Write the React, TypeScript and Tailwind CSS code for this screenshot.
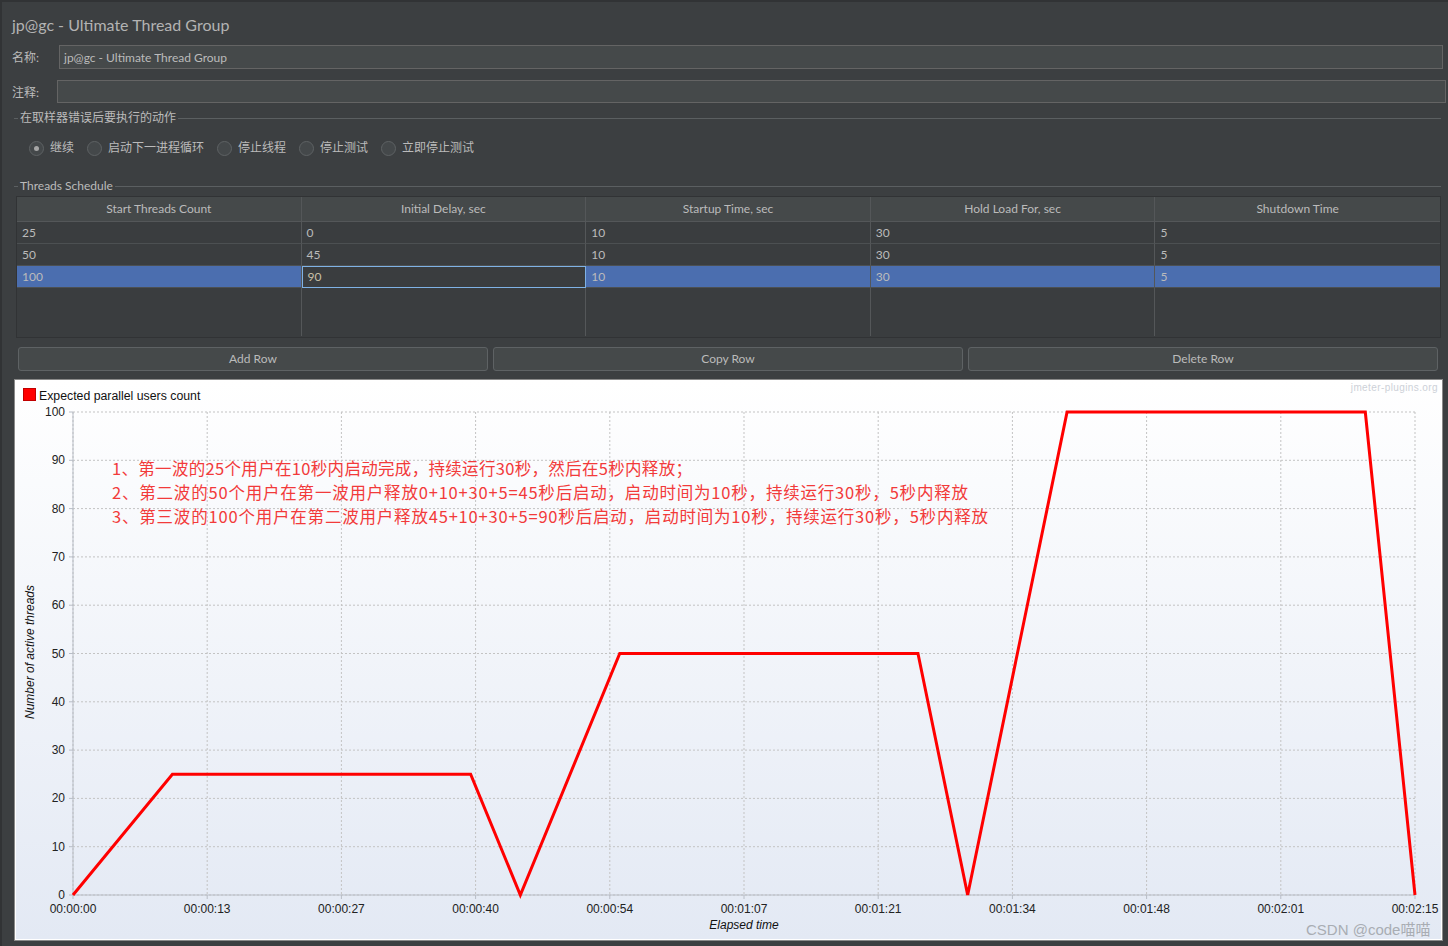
import React from "react";

const cols = [
  "Start Threads Count",
  "Initial Delay, sec",
  "Startup Time, sec",
  "Hold Load For, sec",
  "Shutdown Time",
];
const rows = [
  ["25", "0", "10", "30", "5"],
  ["50", "45", "10", "30", "5"],
  ["100", "90", "10", "30", "5"],
];

function Separator({ label, className }: { label: string; className: string }) {
  return (
    <div className={"flex items-center " + className}>
      <div className="w-[4px] h-px bg-[#5b5f61]" />
      <span className="px-[2px] leading-[16px]">{label}</span>
      <div className="flex-1 h-px bg-[#5b5f61]" />
    </div>
  );
}

function Radio({ label, checked }: { label: string; checked?: boolean }) {
  return (
    <div className="flex items-center gap-[6px]">
      <div className="w-[15px] h-[15px] rounded-full border border-[#5e6264] bg-[#44484a] flex items-center justify-center">
        {checked && <div className="w-[5px] h-[5px] rounded-full bg-[#a6a6a6]" />}
      </div>
      <span className="text-[12px] leading-[16px]">{label}</span>
    </div>
  );
}

function Chart() {
  const x0 = 58;
  const x1 = 1400;
  const yTop = 32;
  const yBot = 515;
  const sx = (t: number) => x0 + (t * (x1 - x0)) / 135;
  const sy = (v: number) => yBot - (v * (yBot - yTop)) / 100;
  const pts = [
    [0, 0],
    [10, 25],
    [40, 25],
    [45, 0],
    [55, 50],
    [85, 50],
    [90, 0],
    [100, 100],
    [130, 100],
    [135, 0],
  ];
  const xLabels = [
    "00:00:00",
    "00:00:13",
    "00:00:27",
    "00:00:40",
    "00:00:54",
    "00:01:07",
    "00:01:21",
    "00:01:34",
    "00:01:48",
    "00:02:01",
    "00:02:15",
  ];
  const yVals = [0, 10, 20, 30, 40, 50, 60, 70, 80, 90, 100];
  const font = "'Liberation Sans', Arial, sans-serif";
  return (
    <svg width={1427} height={560} className="block">
      <defs>
        <linearGradient id="bg" x1="0" y1="0" x2="0" y2="1">
          <stop offset="0%" stopColor="#ffffff" />
          <stop offset="100%" stopColor="#e3e9f4" />
        </linearGradient>
      </defs>
      <rect x={0} y={0} width={1427} height={560} fill="#ffffff" />
      <rect x={1} y={1} width={1425} height={558} fill="url(#bg)" />
      {yVals.map((v) => (
        <line
          key={"h" + v}
          x1={x0}
          x2={x1}
          y1={sy(v)}
          y2={sy(v)}
          stroke="#c3c3c3"
          strokeDasharray="2 2"
          strokeWidth={1}
        />
      ))}
      {xLabels.map((_, i) => {
        const x = x0 + (i * (x1 - x0)) / 10;
        return (
          <line
            key={"v" + i}
            x1={x}
            x2={x}
            y1={yTop}
            y2={yBot}
            stroke="#c3c3c3"
            strokeDasharray="2 2"
            strokeWidth={1}
          />
        );
      })}
      <line x1={x0} x2={x0} y1={yTop} y2={yBot} stroke="#b8bdc6" strokeWidth={1} />
      <line x1={x0} x2={x1} y1={yBot} y2={yBot} stroke="#b8bdc6" strokeWidth={1} />
      {yVals.map((v) => (
        <g key={"yl" + v}>
          <line x1={x0 - 4} x2={x0} y1={sy(v)} y2={sy(v)} stroke="#b8bdc6" />
          <text
            x={x0 - 8}
            y={sy(v) + 4}
            textAnchor="end"
            fontSize={12}
            fontFamily={font}
            fill="#222"
          >
            {v}
          </text>
        </g>
      ))}
      {xLabels.map((l, i) => {
        const x = x0 + (i * (x1 - x0)) / 10;
        return (
          <g key={"xl" + i}>
            <line x1={x} x2={x} y1={yBot} y2={yBot + 4} stroke="#b8bdc6" />
            <text
              x={x}
              y={yBot + 18}
              textAnchor="middle"
              fontSize={12}
              fontFamily={font}
              fill="#222"
            >
              {l}
            </text>
          </g>
        );
      })}
      <text
        x={(x0 + x1) / 2}
        y={549}
        textAnchor="middle"
        fontSize={12}
        fontStyle="italic"
        fontFamily={font}
        fill="#111"
      >
        Elapsed time
      </text>
      <text
        x={0}
        y={0}
        transform="translate(19 272) rotate(-90)"
        textAnchor="middle"
        fontSize={12}
        fontStyle="italic"
        fontFamily={font}
        fill="#111"
      >
        Number of active threads
      </text>
      <rect x={8.5} y={8.5} width={12} height={12} fill="#ff0000" stroke="#c00000" strokeWidth={1} />
      <text x={24} y={20} fontSize={12.3} fontFamily={font} fill="#111">
        Expected parallel users count
      </text>
      <text
        x={1423}
        y={11}
        textAnchor="end"
        fontSize={10}
        letterSpacing={0.4}
        fontFamily={font}
        fill="#cdd1d8"
      >
        jmeter-plugins.org
      </text>
      <polyline
        points={pts.map(([t, v]) => `${sx(t)},${sy(v)}`).join(" ")}
        fill="none"
        stroke="#ff0000"
        strokeWidth={3}
        strokeLinejoin="miter"
      />
      <g fontFamily="'Noto Sans CJK SC', 'Noto Sans', sans-serif" fontSize={16.5} fill="#f23a3a">
        <text x={97} y={95} textLength={580} lengthAdjust="spacing">
          1、第一波的25个用户在10秒内启动完成，持续运行30秒，然后在5秒内释放；
        </text>
        <text x={97} y={119} textLength={856} lengthAdjust="spacing">
          2、第二波的50个用户在第一波用户释放0+10+30+5=45秒后启动，启动时间为10秒，持续运行30秒，5秒内释放
        </text>
        <text x={97} y={143} textLength={876} lengthAdjust="spacing">
          3、第三波的100个用户在第二波用户释放45+10+30+5=90秒后启动，启动时间为10秒，持续运行30秒，5秒内释放
        </text>
      </g>
      <text
        x={1291}
        y={555}
        fontSize={15}
        fontFamily="'Liberation Sans', 'Noto Sans CJK SC', sans-serif"
        fill="#a9adb3"
      >
        CSDN @code喵喵
      </text>
    </svg>
  );
}

export default function App() {
  return (
    <div className="w-[1448px] h-[946px] bg-[#3c3f41] border-t-2 border-l-2 border-[#313335] overflow-hidden text-[#bbbbbb] font-['Lato','Noto_Sans_CJK_SC',sans-serif]">
      <div className="mt-[10px] ml-[10px] text-[16px] leading-[24px] pt-[1px] h-[24px] text-[#b3b3b3]">
        jp@gc - Ultimate Thread Group
      </div>
      <div className="mt-[9px] ml-[10px] flex items-center h-[24px]">
        <span className="w-[47px] text-[12px] pt-[1px]">名称:</span>
        <div className="w-[1384px] h-[24px] bg-[#45494a] border border-[#646464] flex items-center pl-[4px] pt-[1px] text-[12px]">
          jp@gc - Ultimate Thread Group
        </div>
      </div>
      <div className="mt-[11px] ml-[10px] flex items-center h-[23px]">
        <span className="w-[45px] text-[12px] pt-[2px]">注释:</span>
        <div className="w-[1389px] h-[23px] bg-[#45494a] border border-[#646464]" />
      </div>
      <Separator label="在取样器错误后要执行的动作" className="mt-[7px] ml-[12px] w-[1427px] text-[12px]" />
      <div className="mt-[12px] ml-[27px] flex items-center gap-[13px] h-[20px]">
        <Radio label="继续" checked />
        <Radio label="启动下一进程循环" />
        <Radio label="停止线程" />
        <Radio label="停止测试" />
        <Radio label="立即停止测试" />
      </div>
      <Separator label="Threads Schedule" className="mt-[20px] ml-[12px] w-[1427px] text-[12px]" />
      <div className="mt-[2px] ml-[14px] w-[1425px] h-[142px] border border-[#313335] bg-[#3a3d3f] text-[12px]">
        <div className="grid grid-cols-5 h-[25px] bg-[#45494a]">
          {cols.map((c, i) => (
            <div
              key={c}
              className={
                "flex items-center justify-center border-b border-[#545759] " +
                (i < 4 ? "border-r" : "")
              }
            >
              {c}
            </div>
          ))}
        </div>
        {rows.map((r, ri) => (
          <div
            key={ri}
            className={"grid grid-cols-5 h-[22px] " + (ri === 2 ? "bg-[#4b6eaf]" : "")}
          >
            {r.map((v, ci) => {
              const editing = ri === 2 && ci === 1;
              return (
                <div
                  key={ci}
                  className={
                    editing
                      ? "flex items-center pl-[5px] bg-[#3a3d3f] border border-[#7fb2e5] text-[#c9c0a8]"
                      : "flex items-center pl-[5px] border-b border-[#4c5052] " +
                        (ci < 4 ? "border-r border-r-[#545759]" : "")
                  }
                >
                  {v}
                </div>
              );
            })}
          </div>
        ))}
        <div className="grid grid-cols-5 h-[48px]">
          {cols.map((c, i) => (
            <div key={c} className={i < 4 ? "border-r border-[#545759]" : ""} />
          ))}
        </div>
      </div>
      <div className="mt-[9px] ml-[16px] flex gap-[5px] text-[12px]">
        {["Add Row", "Copy Row", "Delete Row"].map((b) => (
          <div
            key={b}
            className="w-[470px] h-[24px] rounded-[3px] border border-[#5e6264] bg-[#45494a] flex items-center justify-center"
          >
            {b}
          </div>
        ))}
      </div>
      <div className="mt-[8px] ml-[12px] w-[1429px] h-[562px] border border-[#8a8a8a]">
        <Chart />
      </div>
    </div>
  );
}
